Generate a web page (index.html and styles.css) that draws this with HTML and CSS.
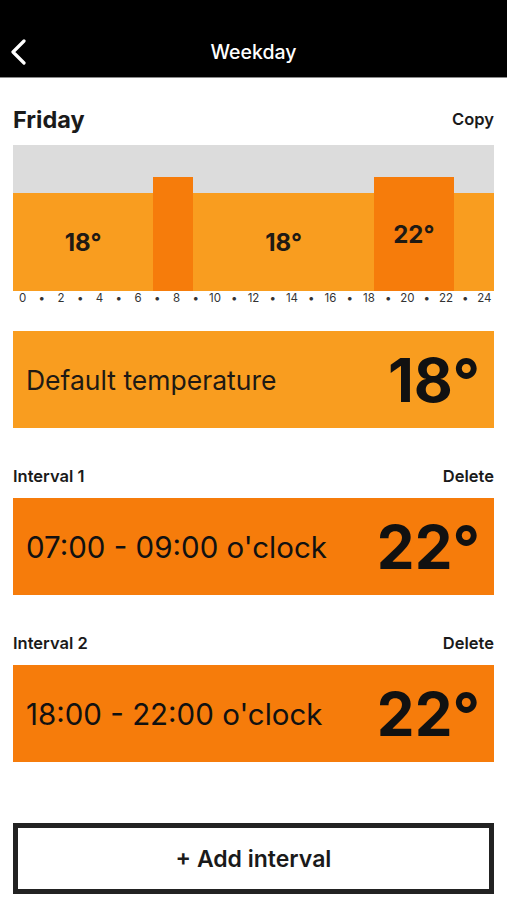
FILE: index.html
```html
<!DOCTYPE html>
<html lang="en">
<head>
  <meta charset="UTF-8" />
  <meta name="viewport" content="width=device-width, initial-scale=1.0"/>
  <title>Weekday</title>
  <link rel="stylesheet" href="styles.css">
</head>
<body>

  <header class="navbar">
    <button class="back" aria-label="Back">
      <svg width="16" height="26" viewBox="0 0 16 26">
        <polyline points="14,2 3,13 14,24" fill="none" stroke="#fff" stroke-width="3.2" stroke-linecap="round" stroke-linejoin="round"/>
      </svg>
    </button>
    <div class="nav-title">Weekday</div>
  </header>

  <main class="content">
    <div class="day-row">
      <h1 class="day">Friday</h1>
      <span class="action">Copy</span>
    </div>

    <!-- day chart: one segment per interval, width = hours -->
    <div class="chart">
      <div class="seg low" style="flex: 7"><span>18°</span></div>
      <div class="seg high" style="flex: 2"></div>
      <div class="seg low" style="flex: 9"><span>18°</span></div>
      <div class="seg high" style="flex: 4"><span>22°</span></div>
      <div class="seg low" style="flex: 2"></div>
    </div>
    <div class="axis">
      <span>0</span><span>•</span><span>2</span><span>•</span><span>4</span><span>•</span>
      <span>6</span><span>•</span><span>8</span><span>•</span><span>10</span><span>•</span>
      <span>12</span><span>•</span><span>14</span><span>•</span><span>16</span><span>•</span>
      <span>18</span><span>•</span><span>20</span><span>•</span><span>22</span><span>•</span>
      <span>24</span>
    </div>

    <div class="card card-default">
      <span class="card-label">Default temperature</span>
      <span class="card-temp">18°</span>
    </div>

    <div class="interval-row">
      <span class="interval-name">Interval 1</span>
      <span class="action">Delete</span>
    </div>
    <div class="card card-interval">
      <span class="card-label big">07:00 - 09:00 o'clock</span>
      <span class="card-temp">22°</span>
    </div>

    <div class="interval-row">
      <span class="interval-name">Interval 2</span>
      <span class="action">Delete</span>
    </div>
    <div class="card card-interval">
      <span class="card-label big">18:00 - 22:00 o'clock</span>
      <span class="card-temp">22°</span>
    </div>

    <button class="add-btn">+ Add interval</button>
  </main>

</body>
</html>
```

FILE: styles.css
```css
body {
  margin: 0;
  font-family: Inter, "Noto Sans", sans-serif;
  color: #1a1a1a;
  background: #fff;
}

.navbar {
  height: 78px;
  background: #000;
  border-bottom: 1px solid #8a8a8a;
  box-sizing: border-box;
  display: flex;
  align-items: center;
  justify-content: center;
  position: relative;
  padding-top: 26px;
}

.back {
  position: absolute;
  left: 10px;
  top: 39px;
  background: none;
  border: none;
  padding: 0;
}

.nav-title {
  color: #fff;
  font-size: 19.5px;
  font-weight: 500;
}

.content {
  padding: 0 13px;
  display: flex;
  flex-direction: column;
}

.day-row {
  display: flex;
  justify-content: space-between;
  align-items: center;
  margin-top: 28px;
  height: 26px;
}

.day {
  margin: 0;
  font-size: 23.5px;
  font-weight: 700;
}

.action {
  font-size: 16.5px;
  font-weight: 600;
}

.chart {
  margin-top: 13px;
  height: 146px;
  background: #dcdcdc;
  display: flex;
  align-items: flex-end;
}

.seg {
  display: flex;
  align-items: center;
  justify-content: center;
  font-size: 24px;
  font-weight: 700;
  color: #1f1a14;
}

.seg.low {
  height: 98px;
  background: #f99d1f;
}

.seg.high {
  height: 114px;
  background: #f67c0b;
}

.axis {
  display: grid;
  grid-template-columns: repeat(25, 1fr);
  height: 14px;
  line-height: 14px;
  font-size: 11.5px;
  color: #333;
  text-align: center;
}

.card {
  display: flex;
  justify-content: space-between;
  align-items: center;
  height: 97px;
  padding: 0 14px 0 13px;
  box-sizing: border-box;
}

.card-default {
  margin-top: 26px;
  background: #f99d1f;
}

.card-interval {
  background: #f67c0b;
}

.card-label {
  font-size: 26.5px;
  color: #1f1a14;
}

.card-label.big {
  font-size: 29.5px;
  color: #111;
}

.card-temp {
  font-size: 60px;
  font-weight: 700;
  color: #111;
}

.interval-row {
  display: flex;
  justify-content: space-between;
  align-items: center;
  height: 18px;
  margin-top: 39px;
  margin-bottom: 13px;
}

.interval-name {
  font-size: 16.5px;
  font-weight: 600;
}

.add-btn {
  margin-top: 61px;
  height: 71px;
  background: #fff;
  border: 5px solid #222;
  font-family: Inter, "Noto Sans", sans-serif;
  font-size: 23px;
  font-weight: 600;
  color: #1a1a1a;
}
```
